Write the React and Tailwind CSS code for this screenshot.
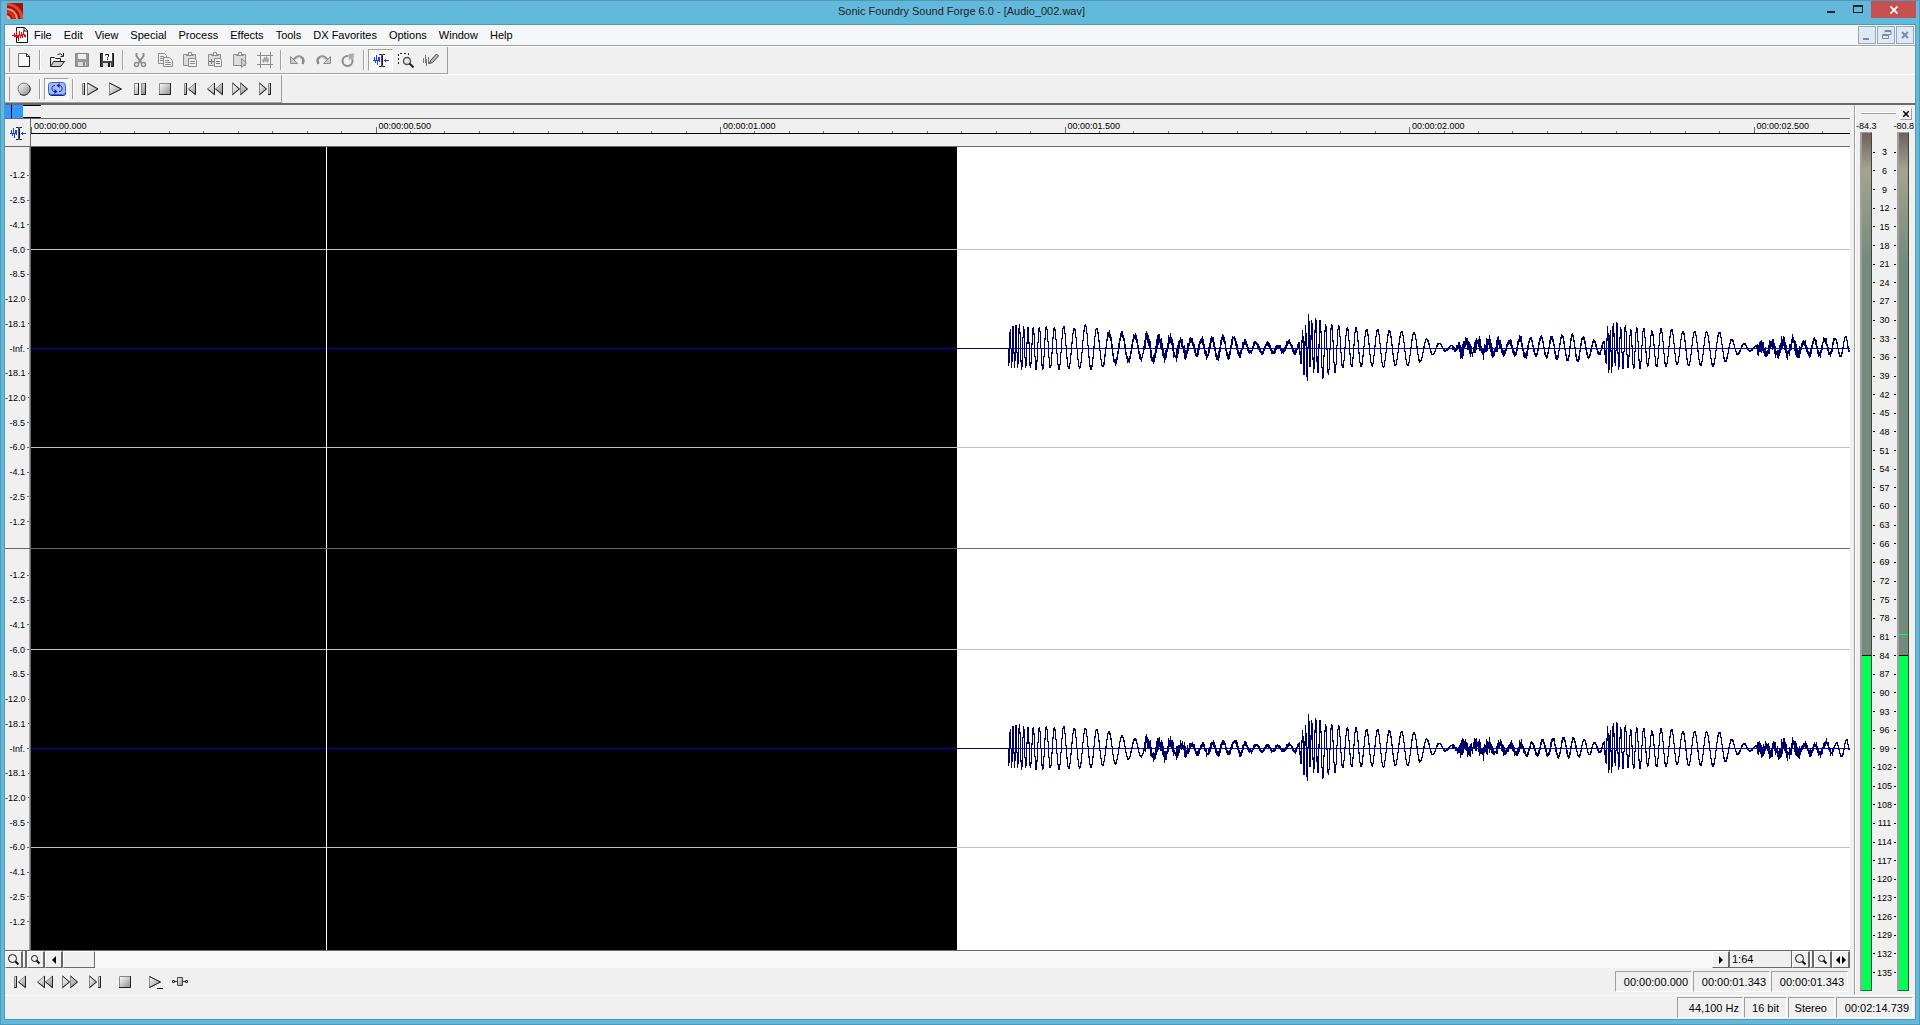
import { useState } from 'react';

const menus = ['File', 'Edit', 'View', 'Special', 'Process', 'Effects', 'Tools', 'DX Favorites', 'Options', 'Window', 'Help'];
const times = ['00:00:00.000', '00:00:00.500', '00:00:01.000', '00:00:01.500', '00:00:02.000', '00:00:02.500'];
const levels = ['-1.2', '-2.5', '-4.1', '-6.0', '-8.5', '-12.0', '-18.1', '-Inf.', '-18.1', '-12.0', '-8.5', '-6.0', '-4.1', '-2.5', '-1.2'];
const meterMarks = Array.from({ length: 45 }, (_, i) => (i + 1) * 3);

// Turning points of the audio as x, y pairs, in thirds of a pixel
const attack = [
  55, 0, 56, 50, 61, -57, 65, 58, 69, -65, 74, 55, 78, -70, 83, 57, 88, -73, 95, 63, 101, -65, 107, 57, 114, -63, 121, 57,
  130, -62, 138, 63, 148, -62, 158, 62, 169, -66, 181, 58, 193, -62, 207, 62, 221, -66, 236, 60, 253, -60, 269, 59,
];
const secondHit = [
  927, -12, 933, 40, 938, -50, 942, 70, 947, -60, 952, 93, 956, -96, 960, 50, 965, -78, 971, 65, 977, -88, 983, 70,
  991, -82, 998, 90, 1007, -72, 1015, 78, 1025, -72, 1035, 72, 1046, -68, 1058, 58, 1072, -62, 1085, 54, 1098, -62,
  1113, 54, 1130, -57, 1146, 52, 1163, -57, 1180, 56, 1198, -53, 1216, 50, 1235, -51, 1253, 52, 1272, -48, 1290, 40,
  1310, -28, 1328, 18, 1348, -16, 1366, 7, 1385, -8,
];
const thirdHit = [
  1842, -18, 1848, 38, 1853, -60, 1857, 64, 1861, -55, 1865, 68, 1870, -75, 1876, 50, 1881, -76, 1886, 62, 1892, -62,
  1899, 60, 1906, -70, 1914, 57, 1922, -56, 1931, 61, 1940, -63, 1950, 60, 1961, -60, 1973, 52, 1986, -52, 2000, 54,
  2013, -60, 2028, 54, 2045, -57, 2061, 48, 2079, -51, 2096, 52, 2114, -51, 2132, 50, 2150, -50, 2169, 53, 2188, -49,
  2206, 39, 2225, -27, 2243, 17, 2262, -15, 2280, 8, 2298, -8,
];

const left = {
  points: [
    ...attack,
    286, -70, 303, 62, 320, -60, 338, 53, 357, -46, 376, 42, 396, -45, 415, 38, 435, -38, 453, 31, 472, -36, 489, 34,
    507, -32, 524, 24, 541, -28, 557, 24, 572, -24, 587, 18, 603, -27, 620, 19, 635, -27, 651, 24, 666, -30, 683, 27,
    699, -34, 715, 25, 731, -32, 749, 20, 764, -20, 781, 11, 797, -17, 816, 14, 833, -16, 850, 11, 866, -8, 879, 11,
    896, -21, 915, 13,
    ...secondHit,
    1395, 5, 1405, -10, 1413, 13, 1430, -19, 1447, 13, 1465, -19, 1480, 14, 1497, -20, 1510, 15, 1527, -18, 1542, 16,
    1558, -23, 1575, 18, 1590, -32, 1606, 26, 1622, -31, 1638, 22, 1653, -34, 1670, 25, 1685, -35, 1701, 31, 1716, -39,
    1733, 35, 1747, -42, 1763, 38, 1779, -33, 1796, 26, 1812, -22, 1828, 16,
    ...thirdHit,
    2307, 5, 2316, -10, 2330, 15, 2345, -20, 2362, 15, 2378, -20, 2393, 13, 2409, -22, 2426, 16, 2442, -20, 2458, 19,
    2473, -29, 2489, 20, 2504, -30, 2520, 18, 2535, -31, 2552, 24, 2567, -37, 2578, 8,
  ],
  noise: [[340, 460, 8], [460, 600, 17], [600, 760, 10], [760, 930, 7], [930, 990, 8], [1385, 1400, 6], [1400, 1530, 19], [1530, 1620, 9], [1620, 1840, 4], [1840, 1870, 10], [2298, 2430, 19], [2430, 2530, 8]],
};

const right = {
  points: [
    ...attack,
    286, -60, 303, 57, 320, -58, 338, 50, 357, -50, 376, 46, 396, -38, 415, 32, 435, -29, 453, 25, 472, -22, 491, 24,
    507, -19, 526, 22, 541, -17, 558, 15, 574, -11, 590, 12, 606, -13, 622, 17, 638, -12, 653, 16, 668, -17, 685, 16,
    700, -20, 715, 14, 735, -22, 752, 18, 764, -15, 783, 9, 799, -11, 816, 9, 833, -9, 848, 7, 864, -9, 880, 8,
    898, -13, 915, 9,
    ...secondHit,
    1408, 8, 1420, -10, 1440, 6, 1460, -11, 1480, 13, 1497, -11, 1515, 13, 1530, -14, 1546, 13, 1562, -13, 1579, 17,
    1593, -14, 1610, 20, 1626, -18, 1642, 20, 1658, -24, 1674, 20, 1689, -29, 1705, 25, 1721, -32, 1736, 25, 1750, -31,
    1767, 25, 1782, -27, 1798, 19, 1813, -18, 1830, 12,
    ...thirdHit,
    2316, 8, 2330, -10, 2340, 11, 2352, -8, 2368, 14, 2380, -10, 2395, 15, 2412, -13, 2428, 15, 2445, -15, 2460, 15,
    2476, -13, 2490, 18, 2508, -21, 2524, 14, 2540, -16, 2555, 24, 2570, -27, 2578, 4,
  ],
  noise: [[460, 600, 20], [600, 760, 8], [760, 930, 5], [930, 990, 8], [1385, 1400, 6], [1400, 1500, 23], [1500, 1600, 13], [1600, 1760, 5], [1840, 1870, 10], [2298, 2430, 22], [2430, 2530, 9]],
};

function random(n) {
  const v = Math.sin(n * 12.9898) * 43758.5453;
  return v - Math.floor(v);
}

// One vertical bar for each pixel column, from the lowest to the highest sample in it
function wavePath({ points, noise }, mid) {
  const samples = [];
  for (let i = 0; i + 3 < points.length; i += 2) {
    const [x0, y0, x1, y1] = points.slice(i, i + 4);
    for (let x = x0; x < x1; x++) {
      const t = (1 - Math.cos((Math.PI * (x - x0)) / (x1 - x0))) / 2;
      samples[x] = y0 + (y1 - y0) * t;
    }
  }
  let d = '';
  for (let c = 18; c < 860; c++) {
    const ys = [0, 1, 2, 3].map((k) => samples[c * 3 + k]).filter((y) => y !== undefined);
    if (!ys.length) continue;
    const zone = noise.find(([a, b]) => c * 3 >= a && c * 3 < b);
    const amp = zone ? zone[2] : 1;
    const top = Math.round((Math.min(...ys) - amp * random(c)) / 3);
    const bottom = Math.round((Math.max(...ys) + amp * random(c + 5000)) / 3);
    d += `M${959 + c}.5 ${mid + top}V${mid + bottom + 1}`;
  }
  return d;
}

const paths = [wavePath(left, 201), wavePath(right, 199)];

function Icon({ children, w = 16, h = 16 }) {
  return (
    <svg width={w} height={h} viewBox={`0 0 ${w} ${h}`} fill="none" aria-hidden="true" className="shrink-0">
      {children}
    </svg>
  );
}

const clipboard = (
  <>
    <path d="M1.5 2.5h12v11h-12z" fill="#dcdcdc" stroke="#8c8c8c" />
    <path d="M4.5 3.5v-1h2v-2h3v2h2v1z" fill="#f0f0f0" stroke="#8c8c8c" />
  </>
);

const icons = {
  new: (
    <Icon>
      <path d="M2.5 1.5h8l3 3v10h-11z" fill="#f8f8f8" stroke="#777" />
      <path d="M10.5 1.5v3h3M13.5 4v10.5h-11" stroke="#222" />
    </Icon>
  ),
  open: (
    <Icon>
      <path d="M1.5 14V5.5h4l1 1h5v3" fill="#eee" stroke="#222" />
      <path d="M1.5 14.5l3-5h11l-4 5z" fill="#ccc" stroke="#222" />
      <path d="M8.5 2.5q3-2 5 1M14.5 1v3.5h-3" stroke="#222" />
    </Icon>
  ),
  save: (
    <Icon>
      <path d="M1.5 1.5h13v13h-13z" fill="#999" stroke="#888" />
      <path d="M4 2h8v5H4z" fill="#eee" />
      <path d="M4 10h8v4H4z" fill="#ddd" />
      <path d="M9 10h2v4H9z" fill="#888" />
    </Icon>
  ),
  saveAs: (
    <Icon>
      <path d="M1.5 1.5h13v13h-13z" fill="#444" stroke="#111" />
      <path d="M4 1h9v8H4z" fill="#fff" />
      <path d="M6.5 3.5v-1h3v2l-1 1v1M8.5 7v1" stroke="#111" />
      <path d="M4 11h8v4H4z" fill="#ddd" />
      <path d="M9 11h2v4H9z" fill="#111" />
    </Icon>
  ),
  cut: (
    <Icon>
      <path d="M4.5 1v3l5 7M11.5 1v3l-5 7" stroke="#8c8c8c" strokeWidth="2" />
      <circle cx="4.5" cy="12.5" r="2" stroke="#8c8c8c" strokeWidth="1.5" />
      <circle cx="11.5" cy="12.5" r="2" stroke="#8c8c8c" strokeWidth="1.5" />
    </Icon>
  ),
  copy: (
    <Icon>
      <path d="M1.5 1.5h6l2 2v8h-8z" fill="#eee" stroke="#8c8c8c" />
      <path d="M3 4.5h4M3 6.5h4M3 8.5h3" stroke="#8c8c8c" />
      <path d="M6.5 5.5h6l3 3v6h-9z" fill="#eee" stroke="#8c8c8c" />
      <path d="M8 8.5h4M8 10.5h6M8 12.5h6" stroke="#8c8c8c" />
    </Icon>
  ),
  paste: (
    <Icon>
      {clipboard}
      <path d="M6.5 6.5h6l2 2v6h-8z" fill="#eee" stroke="#8c8c8c" />
      <path d="M8 9.5h5M8 11.5h5" stroke="#8c8c8c" />
    </Icon>
  ),
  pasteMix: (
    <Icon>
      {clipboard}
      <path d="M7.5 6.5h6l1 2v6h-7z" fill="#eee" stroke="#8c8c8c" />
      <path d="M9 9.5h4M9 11.5h4M2 9.5h5M4.5 7v5" stroke="#777" />
    </Icon>
  ),
  pastePlay: (
    <Icon>
      {clipboard}
      <path d="M9.5 6.5l5 4.5-5 4.5z" fill="#ccc" stroke="#8c8c8c" />
    </Icon>
  ),
  crop: (
    <Icon>
      <path d="M0 3.5h16M0 12.5h16M3.5 0v16M13.5 0v16M5 8h1v2h1V6h1v3h1V5h1v5h1V7h1" stroke="#8c8c8c" />
    </Icon>
  ),
  undo: (
    <Icon>
      <path d="M3 9q4-6 8-4 4 2 1.500 7" stroke="#8c8c8c" strokeWidth="2.5" />
      <path d="M3.5 9q4-5 7-4" stroke="#ddd" />
      <path d="M.5 4.5v7h7z" fill="#ccc" stroke="#8c8c8c" />
    </Icon>
  ),
  redo: (
    <Icon>
      <path d="M13 9Q9 3 5 5 1 7 3.5 12" stroke="#8c8c8c" strokeWidth="2.5" />
      <path d="M12.5 9q-4-5-7-4" stroke="#ddd" />
      <path d="M15.5 4.5v7h-7z" fill="#ccc" stroke="#8c8c8c" />
    </Icon>
  ),
  repeat: (
    <Icon>
      <circle cx="7.5" cy="9" r="5" stroke="#8c8c8c" strokeWidth="2" />
      <path d="M8 2l6-1v6l-2-1-3 3z" fill="#aaa" stroke="#eee" strokeWidth=".5" />
    </Icon>
  ),
  editTool: (
    <Icon>
      <g shapeRendering="crispEdges">
        <path d="M1.5 5v4M2.5 8v3M3.5 3v6M4.5 8v5M5.5 5v4M6.5 5v5M0 8.5h2M11 8.5h5M12.5 7v3" stroke="#1a3cff" />
        <path d="M6 2.5h6M6 14.5h6" stroke="#222" />
        <path d="M9 2v13" stroke="#555" strokeWidth="2" />
        <path d="M9.5 4v9" stroke="#111" />
      </g>
    </Icon>
  ),
  magnify: (
    <Icon>
      <path d="M.5 12V1.5h10V6" stroke="#222" strokeDasharray="2 2" />
      <circle cx="9" cy="9" r="3.5" fill="#e8e8e8" stroke="#555" strokeWidth="1.5" />
      <path d="M11.5 11.5l4 4" stroke="#222" strokeWidth="2" />
    </Icon>
  ),
  pencil: (
    <Icon>
      <path d="M.5 6v5M2.5 3v8M3.5 7v7M5.5 5v7M7.5 8v3" stroke="#777" />
      <path d="M6.5 11.5l1-3 6-6.5 2 2-6 6.5z" fill="#bbb" stroke="#444" />
    </Icon>
  ),
  record: (
    <Icon>
      <circle cx="8" cy="8" r="6" fill="url(#face)" stroke="#777" />
      <path d="M13 4.5A6.3 6.3 0 0 1 4 13" stroke="#333" />
    </Icon>
  ),
  loop: (
    <Icon w={18} h={14}>
      <rect x=".5" y=".5" width="17" height="12" rx="3" fill="#9dbcff" stroke="#3a62d8" />
      <path d="M1 11.5q0 2 3 2h11q3 0 3-3" stroke="#10208c" />
      <path d="M7 3.5H5.5l-1.5 2v2l1.5 2H7M11 9.5h1.500l1.500-2v-2l-1.500-2H11" stroke="#2b1a9e" />
      <path d="M6.5 7l3 2.5-3 2.5zM11.5 1l-3 2.5 3 2.5z" fill="#2b1a9e" />
    </Icon>
  ),
  playAll: (
    <Icon>
      <path d="M.5 2.5h2v11h-2z" fill="url(#face)" stroke="#888" />
      <path d="M2.5 2v12" stroke="#222" />
      <path d="M5.5 2v12L16 8z" fill="url(#face)" stroke="#888" />
      <path d="M5.5 14L16 8 5.5 2" stroke="#222" />
    </Icon>
  ),
  play: (
    <Icon>
      <path d="M2.5 2v12L14 8z" fill="url(#face)" stroke="#888" />
      <path d="M2.5 14L14.5 8l-12-6" stroke="#222" />
    </Icon>
  ),
  pause: (
    <Icon>
      <path d="M2.5 2.5h4v11h-4zM9.5 2.5h4v11h-4z" fill="url(#face)" stroke="#888" />
      <path d="M6.5 2v11.5H2M13.5 2v11.5H9" stroke="#222" />
    </Icon>
  ),
  stop: (
    <Icon>
      <path d="M2.5 2.5h11v11h-11z" fill="url(#face)" stroke="#888" />
      <path d="M13.5 2v11.5H2" stroke="#222" />
    </Icon>
  ),
  first: (
    <Icon>
      <path d="M2.5 2.5h2v11h-2z" fill="url(#face)" stroke="#888" />
      <path d="M4.5 2v11.5H2" stroke="#222" />
      <path d="M13.5 2v12l-7-6z" fill="url(#face)" stroke="#888" />
      <path d="M6.5 8l7 5.5V2" stroke="#222" />
    </Icon>
  ),
  rewind: (
    <Icon>
      <path d="M7.5 2v12l-7-6zM15.5 2v12l-7-6z" fill="url(#face)" stroke="#888" />
      <path d="M.5 8l7 5.5V2M8.5 8l7 5.5V2" stroke="#222" />
    </Icon>
  ),
  forward: (
    <Icon>
      <path d="M.5 2v12l7-6zM8.5 2v12l7-6z" fill="url(#face)" stroke="#888" />
      <path d="M.5 13.5l7-5.5-7-6M8.5 13.5l7-5.5-7-6" stroke="#222" />
    </Icon>
  ),
  last: (
    <Icon>
      <path d="M2.5 2v12l7-6z" fill="url(#face)" stroke="#888" />
      <path d="M2.5 13.5l7-5.5-7-6" stroke="#222" />
      <path d="M11.5 2.5h2v11h-2z" fill="url(#face)" stroke="#888" />
      <path d="M13.5 2v11.5H11" stroke="#222" />
    </Icon>
  ),
  playPlug: (
    <Icon>
      <path d="M2.5 2.5v11l11-5.5z" fill="url(#face)" stroke="#888" />
      <path d="M2.5 13.5l11-5.5-11-5.5" stroke="#222" />
      <path d="M10 14.5h6" stroke="#111" />
    </Icon>
  ),
  plugin: (
    <Icon>
      <path d="M3 7.5h10" stroke="#333" />
      <path d="M.5 6.5h2v2h-2zM13.5 6.5h2v2h-2z" fill="#ddd" stroke="#333" />
      <path d="M5.5 3.5h5v8h-5z" fill="url(#face)" stroke="#444" />
    </Icon>
  ),
  zoomIn: (
    <Icon w={13} h={13}>
      <circle cx="5.5" cy="5.5" r="4" stroke="#111" />
      <path d="M8.5 8.5l3 3" stroke="#111" strokeWidth="2" />
    </Icon>
  ),
  zoomOut: (
    <Icon w={11} h={11}>
      <circle cx="4.5" cy="4.5" r="3" stroke="#111" />
      <path d="M6.5 6.5l3 3" stroke="#111" strokeWidth="2" />
    </Icon>
  ),
  arrowLeft: <Icon w={8} h={8}><path d="M6 0v8L2 4z" fill="#000" /></Icon>,
  arrowRight: <Icon w={8} h={8}><path d="M2 0v8l4-4z" fill="#000" /></Icon>,
  arrows: <Icon w={12} h={8}><path d="M5 0v8L1 4zM7 0v8l4-4z" fill="#000" /></Icon>,
};

const editBar = [
  ['new', 'New'], null,
  ['open', 'Open'], ['save', 'Save'], ['saveAs', 'Save As'], null,
  ['cut', 'Cut'], ['copy', 'Copy'], ['paste', 'Paste'], ['pasteMix', 'Mix'], ['pastePlay', 'Play Clipboard'], ['crop', 'Trim/Crop'], null,
  ['undo', 'Undo'], ['redo', 'Redo'], ['repeat', 'Repeat'], null,
  ['editTool', 'Edit Tool'], ['magnify', 'Magnify Tool'], ['pencil', 'Pencil Tool'],
];

const transportBar = [
  ['record', 'Record'], null,
  ['loop', 'Loop Playback'], null,
  ['playAll', 'Play All'], ['play', 'Play'], ['pause', 'Pause'], ['stop', 'Stop'],
  ['first', 'Go to Start'], ['rewind', 'Rewind'], ['forward', 'Forward'], ['last', 'Go to End'],
];

function ToolButton({ name, label, active, onClick }) {
  return (
    <button
      aria-label={label}
      onClick={onClick}
      className={`flex h-[22px] w-[25px] items-center justify-center ${
        active ? 'border border-t-[#a0a0a0] border-l-[#a0a0a0] border-r-white border-b-white bg-[#f8f8f8]' : ''
      }`}
    >
      {icons[name]}
    </button>
  );
}

function Toolbar({ items, active, onPick }) {
  return (
    <div className="flex w-max items-center border-r border-b border-[#a0a0a0] pr-1">
      <div className="mr-px h-6 w-[5px] border-l border-r border-l-white border-r-[#a0a0a0]" />
      {items.map((item, i) =>
        item ? (
          <ToolButton key={item[0]} name={item[0]} label={item[1]} active={item[0] === active} onClick={() => onPick?.(item[0])} />
        ) : (
          <div key={i} className="flex h-5 w-2 justify-center">
            <div className="w-0.5 border-l border-l-[#a0a0a0] border-r border-r-white" />
          </div>
        )
      )}
    </div>
  );
}

function ScrollButton({ name, label }) {
  return (
    <button aria-label={label} className="flex w-[18px] items-center justify-center border-t border-l border-r-2 border-b border-t-white border-l-white border-r-[#696969] border-b-[#696969] bg-[#f0f0f0]">
      {icons[name]}
    </button>
  );
}

function Splitter() {
  return <div className="w-1 border-l border-r-2 border-b border-l-white border-r-[#696969] border-b-[#696969] bg-[#f0f0f0]" />;
}

function Readout({ children, className }) {
  return (
    <div className={`flex h-[21px] items-center justify-end border border-t-[#a0a0a0] border-l-[#a0a0a0] border-r-white border-b-white text-[11px] ${className}`}>
      {children}
    </div>
  );
}

function Scale({ className }) {
  return (
    <div className={`flex min-h-0 flex-1 flex-col border-r border-[#a0a0a0] ${className}`}>
      {levels.map((level, i) => (
        <div key={i} className="flex min-h-0 flex-1 items-center justify-end gap-0.5">
          <span className="text-[9px] leading-3">{level}</span>
          <span className="h-px w-0.5 bg-[#696969]" />
        </div>
      ))}
    </div>
  );
}

function Channel({ path, mid }) {
  return (
    <svg viewBox="0 0 1819 401" preserveAspectRatio="none" shapeRendering="crispEdges" className="block min-h-0 w-full flex-1 bg-white">
      <rect width="926" height="401" fill="#000" />
      <path d={`M0 ${mid - 98.5}H1819M0 ${mid + 99.5}H1819`} stroke="#c0c0c0" />
      <path d={`M926 ${mid + 0.5}H978`} stroke="#000060" />
      <path d={path} stroke="#000060" />
      <path d={`M0 ${mid + 0.5}H926`} stroke="#0000c0" />
      <path d={`M977 ${mid + 0.5}H1819`} stroke="#0000e0" />
      <rect x="295" width="1" height="401" fill="#fff" />
    </svg>
  );
}

function Meter({ peak }) {
  return (
    <div className="relative flex w-3 flex-col border-t border-l-2 border-r border-b border-t-[#a0a0a0] border-l-[#a0a0a0] border-r-[#3c463f] border-b-[#007a2c]">
      <div className="flex-[523] bg-linear-to-b from-[#70605f] via-[#a3a48f] via-7% to-[#748a7d] to-25%" />
      <div className="flex-[335] border-t border-black bg-[#00ff57]" />
      {peak && <div className="absolute top-[58.5%] h-px w-full bg-[#00ff57]" />}
    </div>
  );
}

export default function App() {
  const [tool, setTool] = useState('editTool');

  return (
    <div className="flex h-screen flex-col overflow-hidden border border-[#5099b8] bg-[#62b9dc] font-['Liberation_Sans',Arial,sans-serif] text-[11px] leading-3 text-black">
      <svg className="absolute h-0 w-0" aria-hidden="true">
        <linearGradient id="face" x1="0" y1="0" x2="1" y2="1">
          <stop offset="0" stopColor="#fff" />
          <stop offset="1" stopColor="#8c8c8c" />
        </linearGradient>
      </svg>

      <header className="flex h-[23px] shrink-0 items-start pl-1.5">
        <div className="flex flex-1 pt-0.5">
          <svg width="16" height="16" viewBox="0 0 16 16">
            <path d="M0 0h16v16H0z" fill="#a01410" />
            <path d="M0 1q14 2 15 15" fill="none" stroke="#e8442c" strokeWidth="3" />
            <path d="M0 6q9 1 10 10" fill="none" stroke="#ff9460" strokeWidth="2" />
            <path d="M0 9q6 1 7 7" fill="none" stroke="#d42a1c" strokeWidth="3" />
            <path d="M0 12q3 1 4 4H0z" fill="#ffa870" />
          </svg>
        </div>
        <h1 className="pt-1 text-[11px] leading-3 text-[#222]">Sonic Foundry Sound Forge 6.0 - [Audio_002.wav]</h1>
        <div className="flex flex-1 justify-end pr-[3px]">
          <button aria-label="Minimize" className="flex h-[17px] w-[26px] items-center justify-center">
            <span className="mt-1 h-0.5 w-2 bg-[#222]" />
          </button>
          <button aria-label="Maximize" className="flex h-[17px] w-[27px] items-center justify-center">
            <span className="mb-0.5 h-2 w-2.5 border border-t-2 border-[#222]" />
          </button>
          <button aria-label="Close" className="flex h-[17px] w-[45px] items-center justify-center bg-[#c75050]">
            <svg width="8" height="8" viewBox="0 0 8 8"><path d="M.5.5l7 7M7.5.5l-7 7" stroke="#fff" strokeWidth="1.8" /></svg>
          </button>
        </div>
      </header>

      <div className="mx-[3px] mb-1 flex min-h-0 flex-1 flex-col border border-[#5099b8] bg-[#f0f0f0]">
        <nav className="flex h-5 shrink-0 items-center bg-[#f5f6f8] pr-px pl-[7px]">
          <svg width="16" height="16" viewBox="0 0 16 16">
            <path d="M4.5.5h8l3 3v12h-11z" fill="#fff" stroke="#111" />
            <path d="M12 .5v3.5h3.5" fill="none" stroke="#111" />
            <path d="M0 8.5h2M2.5 6v4M3.5 8v2M4.5 4v6M5.5 8v3M6.5 8v6M7.5 4v5M8.5 8v3M9.5 5v4M10.5 7v4M11.5 4v4M12.5 7v3M13.5 8v2" stroke="#f00" />
          </svg>
          {menus.map((menu) => (
            <button key={menu} className="px-1.5 text-[11px] leading-4">{menu}</button>
          ))}
          <div className="ml-auto flex gap-px">
            {[
              ['Minimize document', <path key="a" d="M4 11h6v2H4z" fill="#7d8b9c" />],
              ['Restore document', <path key="b" d="M7 5.5V3.5h6v4h-2M4.5 7.5h6v4h-6zM7 4.5h6M4 8.5h6" fill="none" stroke="#7d8b9c" />],
              ['Close document', <path key="c" d="M5 5l6 6M11 5l-6 6" stroke="#7d8b9c" strokeWidth="2" />],
            ].map(([label, shape]) => (
              <button key={label} aria-label={label} className="size-[18px] border border-[#94a5b9] bg-[#dde9f7]">
                <svg width="16" height="16" viewBox="0 0 16 16">{shape}</svg>
              </button>
            ))}
          </div>
        </nav>

        <div className="flex shrink-0 flex-col border-t border-b-2 border-t-[#a0a0a0] border-b-[#696969]">
          <div className="border-t border-white *:h-[27px]"><Toolbar items={editBar} active={tool} onPick={setTool} /></div>
          <div className="border-t border-white *:h-7"><Toolbar items={transportBar} active="loop" /></div>
        </div>

        <div className="flex min-h-0 flex-1">
          <main className="flex min-w-0 flex-1 flex-col border-r border-[#a0a0a0]">
            <div className="mr-1 flex min-h-0 flex-1 flex-col">
              <div className="flex h-3.5 shrink-0 border-b border-[#696969]">
                <div className="w-[7px] border-r border-black bg-[#3399ff]" />
                <div className="w-[11px] bg-[#3399ff]" />
                <div className="w-[18px] border-t border-b border-black" />
              </div>

              <div className="flex h-7 shrink-0 border-b border-[#696969]">
                <div className="flex w-[26px] shrink-0 items-center justify-center border-r border-[#696969]">{icons.editTool}</div>
                <div className="flex min-w-0 flex-1 flex-col">
                  <div className="flex h-[15px] overflow-hidden border-b border-black">
                    {times.map((time) => (
                      <div key={time} className="relative flex w-[18.94%] shrink-0 items-end">
                        <span className="absolute top-px left-[3px] text-[9px] leading-3">{time}</span>
                        <span className="h-1.5 flex-1 border-l border-[#696969]" />
                        {Array.from({ length: 9 }, (_, i) => (
                          <span key={i} className="h-0.5 flex-1 border-l border-[#696969]" />
                        ))}
                      </div>
                    ))}
                  </div>
                </div>
              </div>

              <div className="flex min-h-0 flex-1 border-b border-[#696969]">
                <div className="flex w-[26px] shrink-0 flex-col border-r border-[#696969]">
                  <Scale className="pt-4 pb-3.5" />
                  <div className="h-px bg-[#696969]" />
                  <Scale className="pt-3.5 pb-4" />
                </div>
                <div className="flex min-w-0 flex-1 flex-col">
                  <Channel path={paths[0]} mid={201} />
                  <div className="h-px bg-[#696969]" />
                  <Channel path={paths[1]} mid={199} />
                </div>
              </div>

              <div className="flex h-[17px] shrink-0">
                <ScrollButton name="zoomIn" label="Zoom in level" />
                <Splitter />
                <ScrollButton name="zoomOut" label="Zoom out level" />
                <ScrollButton name="arrowLeft" label="Scroll left" />
                <div className="w-8 border-t border-l border-r border-b border-t-white border-l-white border-r-[#696969] border-b-[#696969]" />
                <div className="flex-1 bg-[#f8f8f8]" />
                <ScrollButton name="arrowRight" label="Scroll right" />
                <div className="w-[61px] border-b border-[#696969] pl-0.5 text-[11px] leading-4">1:64</div>
                <div className="w-px bg-[#696969]" />
                <ScrollButton name="zoomIn" label="Zoom in time" />
                <Splitter />
                <ScrollButton name="zoomOut" label="Zoom out time" />
                <ScrollButton name="arrows" label="Zoom to selection" />
              </div>
            </div>

            <div className="flex h-[27px] shrink-0 items-center pr-1.5 pl-0.5">
              <ToolButton name="first" label="Go to start" />
              <ToolButton name="rewind" label="Rewind" />
              <ToolButton name="forward" label="Forward" />
              <ToolButton name="last" label="Go to end" />
              <div className="w-[5px]" />
              <ToolButton name="stop" label="Stop" />
              <div className="w-[5px]" />
              <ToolButton name="playPlug" label="Play plug-in" />
              <ToolButton name="plugin" label="Plug-in chain" />
              <div className="ml-auto flex gap-px">
                <Readout className="w-[77px] pr-[3px]">00:00:00.000</Readout>
                <Readout className="w-[77px] pr-[3px]">00:00:01.343</Readout>
                <Readout className="w-[77px] pr-[3px]">00:00:01.343</Readout>
              </div>
            </div>
          </main>

          <aside className="flex w-[60px] shrink-0 flex-col border-l border-white pb-1">
            <div className="flex h-[15px] items-end justify-between pr-[3px] pl-[5px]">
              <div className="mb-1.5 h-0.5 w-[35px] border-t border-b border-t-white border-b-[#a0a0a0]" />
              <button aria-label="Close meters" className="flex size-3 items-center justify-center border border-t-white border-l-white border-r-[#a0a0a0] border-b-[#a0a0a0]">
                <svg width="6" height="6" viewBox="0 0 6 6"><path d="M0 0l6 6M6 0L0 6" stroke="#000" strokeWidth="1.5" /></svg>
              </button>
            </div>
            <div className="flex h-3 justify-between pr-px text-[9px] leading-3">
              <span>-84.3</span>
              <span>-80.8</span>
            </div>
            <div className="flex min-h-0 flex-1 pr-1.5 pl-1">
              <Meter />
              <div className="flex min-w-0 flex-1 flex-col pt-[11px] pb-[9px]">
                {meterMarks.map((mark) => (
                  <div key={mark} className="flex min-h-0 flex-1 items-center justify-between px-px text-[9px] leading-3">
                    <span className="h-px w-0.5 bg-black" />
                    <span>{mark}</span>
                    <span className="h-px w-0.5 bg-black" />
                  </div>
                ))}
              </div>
              <Meter peak />
            </div>
          </aside>
        </div>

        <footer className="flex h-6 shrink-0 items-center justify-end gap-px border-t border-white pr-0.5">
          <Readout className="w-[66px] pr-[3px]">44,100 Hz</Readout>
          <Readout className="w-[43px] pr-[7px]">16 bit</Readout>
          <Readout className="w-[47px] pr-[7px]">Stereo</Readout>
          <Readout className="w-[77px] pr-[3px]">00:02:14.739</Readout>
        </footer>
      </div>
    </div>
  );
}
